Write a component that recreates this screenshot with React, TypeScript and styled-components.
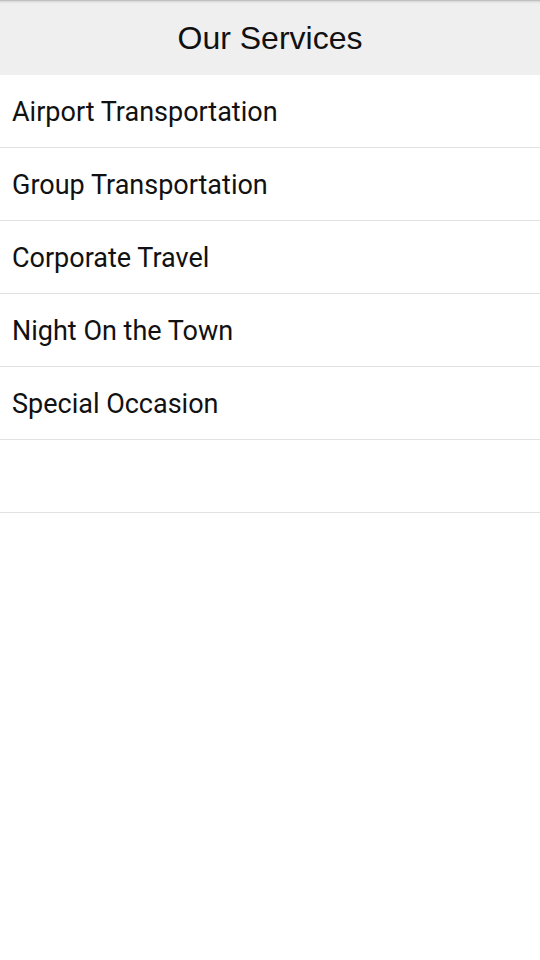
import { createGlobalStyle, styled } from 'styled-components';

const services = [
  'Airport Transportation',
  'Group Transportation',
  'Corporate Travel',
  'Night On the Town',
  'Special Occasion',
  '',
];

const GlobalStyle = createGlobalStyle`
  html, body {
    margin: 0;
    padding: 0;
    background: #ffffff;
  }
`;

const App = () => (
  <>
    <GlobalStyle />
    <SLayout>
      <SHeader>
        <STitle>Our Services</STitle>
      </SHeader>
      <SList>
        {services.map((name, i) => (
          <SRow key={i}>{name}</SRow>
        ))}
      </SList>
    </SLayout>
  </>
);

const SLayout = styled.main`
  width: 540px;
  min-height: 960px;
  background: #ffffff;
`;

const SHeader = styled.header`
  height: 75px;
  padding-top: 2px;
  box-sizing: border-box;
  display: flex;
  align-items: center;
  justify-content: center;
  background: linear-gradient(to bottom, #a9a9a9 0, #d6d6d6 1px, #ececec 3px, #efefef 5px);
`;

const STitle = styled.h1`
  margin: 0;
  font-family: 'Liberation Sans', Arial, sans-serif;
  font-weight: 400;
  font-size: 32px;
  color: #111111;
`;

const SList = styled.ul`
  list-style: none;
  margin: 0;
  padding: 0;
`;

const SRow = styled.li`
  height: 73px;
  box-sizing: border-box;
  padding: 2px 12px 0;
  display: flex;
  align-items: center;
  border-bottom: 1px solid #e2e2e2;
  font-family: Roboto, 'Noto Sans', sans-serif;
  font-size: 27px;
  color: #111111;
`;

export default App;
